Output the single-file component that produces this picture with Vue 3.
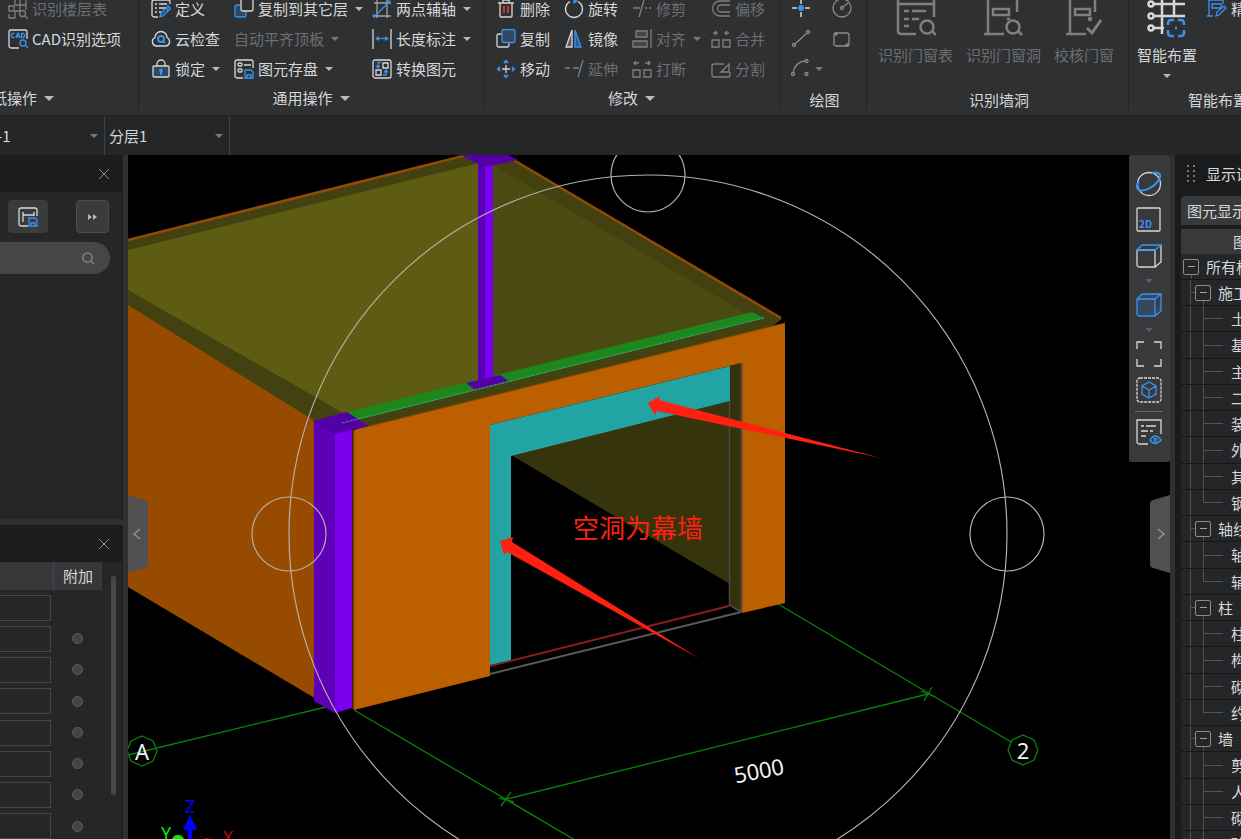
<template>
  <div class="app">
    <!-- 功能区 -->
    <header class="ribbon">
      <section v-for="g in groups" :key="g.label" class="group" :class="g.cls">
        <div class="tools">
          <button
            v-for="t in g.tools"
            :key="t.text"
            type="button"
            class="tool"
            :class="{ off: t.off }"
            :disabled="t.off"
          >
            <svg v-if="t.icon" class="icon" viewBox="0 0 20 20" v-html="icons[t.icon]"></svg>
            <span>{{ t.text }}</span>
            <i v-if="t.more" class="caret"></i>
          </button>
        </div>
        <button type="button" class="group-label">{{ g.label }}<i class="caret big"></i></button>
      </section>

      <section class="group draw">
        <div class="tools">
          <button v-for="d in drawTools" :key="d.icon" type="button" class="tool" :aria-label="d.name">
            <svg class="icon" viewBox="0 0 20 20" v-html="icons[d.icon]"></svg>
            <i v-if="d.more" class="caret dim"></i>
          </button>
        </div>
        <div class="group-label low">绘图</div>
      </section>

      <section class="group holes">
        <div class="bigs">
          <button v-for="b in holeTools" :key="b.text" type="button" class="big-tool off" disabled>
            <svg class="big-icon" viewBox="0 0 40 40" v-html="icons[b.icon]"></svg>
            <span>{{ b.text }}</span>
          </button>
        </div>
        <div class="group-label low">识别墙洞</div>
      </section>

      <section class="group smart">
        <div class="bigs">
          <button type="button" class="big-tool">
            <svg class="big-icon" viewBox="0 0 40 40" v-html="icons.smart"></svg>
            <span>智能布置</span>
            <i class="caret"></i>
          </button>
          <button type="button" class="tool">
            <svg class="icon" viewBox="0 0 20 20" v-html="icons.precise"></svg>
            <span>精</span>
          </button>
        </div>
        <div class="group-label low">智能布置</div>
      </section>
    </header>

    <!-- 楼层选择 -->
    <div class="floor-bar">
      <label class="pick first">
        <select aria-label="楼层"><option>-1</option></select>
        <i class="caret dim"></i>
      </label>
      <label class="pick">
        <select aria-label="分层"><option>分层1</option></select>
        <i class="caret dim"></i>
      </label>
    </div>

    <main class="body">
      <!-- 左侧面板 -->
      <aside class="left">
        <section class="panel">
          <div class="panel-head">
            <button type="button" class="close" aria-label="关闭">
              <svg viewBox="0 0 12 12"><path d="M1 1l10 10M11 1L1 11" /></svg>
            </button>
          </div>
          <div class="panel-tools">
            <button type="button" class="chip" aria-label="存档">
              <svg class="icon" viewBox="0 0 20 20" v-html="icons.archive"></svg>
            </button>
            <button type="button" class="chip more" aria-label="更多">
              <svg viewBox="0 0 10 8"><path d="M0 1l4 3-4 3zM5 1l4 3-4 3z" /></svg>
            </button>
          </div>
          <div class="search">
            <input type="text" aria-label="搜索" />
            <svg viewBox="0 0 14 14"><circle cx="6" cy="6" r="5" /><path d="M10 10l3 3" /></svg>
          </div>
        </section>

        <section class="panel">
          <div class="panel-head">
            <button type="button" class="close" aria-label="关闭">
              <svg viewBox="0 0 12 12"><path d="M1 1l10 10M11 1L1 11" /></svg>
            </button>
          </div>
          <div class="props">
            <table>
              <thead>
                <tr><th></th><th class="extra">附加</th></tr>
              </thead>
              <tbody>
                <tr v-for="n in 8" :key="n">
                  <td><input type="text" class="value" :aria-label="'属性值' + n" /></td>
                  <td class="extra">
                    <input v-if="n > 1" type="checkbox" class="dot" :aria-label="'附加' + n" />
                  </td>
                </tr>
              </tbody>
            </table>
            <div class="scrollbar"></div>
          </div>
        </section>
      </aside>

      <!-- 三维视图 -->
      <div class="viewport">
        <svg class="scene" viewBox="128 155 1042 684" preserveAspectRatio="xMinYMin slice">
          <!-- 轴网 -->
          <g class="axis">
            <path d="M128 755L330 706M354 710L580 843M778 604L1011 742M507 799L928 694" />
            <path d="M501 806L511 792M499 798L514 802M924 701L932 687M921 691L935 697" />
            <path d="M142 736l11 5 4 10-4 10-11 5-11-5-4-10 4-10z" />
            <path d="M1023 735l11 5 4 10-4 10-11 5-11-5-4-10 4-10z" />
          </g>
          <!-- 墙体 -->
          <polygon fill="#964b00" points="128,300 318,412 318,700 128,587" />
          <polygon fill="#43410f" points="128,240 467,156 512,160 782,319 770,328 360,430 315,421 128,305" />
          <path d="M128 240L465 155.500M512 159L781 318" stroke="#924b05" stroke-width="2.500" fill="none" />
          <polygon fill="#5d5c12" points="128,250 479,163 479,385 345,414 128,290" />
          <polygon fill="#4b4a10" points="491,164 744,312 744,318 491,382" />
          <polygon fill="#1c871b" points="347,412 752,312 764,318 345,423" />
          <polygon fill="#bc5f00" points="354,430 785,323 785,603 742,613 742,363 490,425 490,676 354,710" />
          <path d="M369 426L785 323" stroke="#7d4506" fill="none" />
          <path d="M353.500 430V709M741.500 363V612" stroke="#7a4204" stroke-width="2" fill="none" />
          <!-- 柱 -->
          <polygon fill="#5a00b8" points="478,162 485,164 485,384 478,384" />
          <polygon fill="#7800ee" points="485,164 493,162 493,382 485,384" />
          <polygon fill="#5300a4" points="461,155 508,155 518,160 484,167" />
          <polygon fill="#5300a4" points="466,383 500,375 509,381 475,390" />
          <polygon fill="#5e00b8" points="314,420 335,432 335,713 314,701" />
          <polygon fill="#7a00ee" points="335,432 352,428 352,708 335,713" />
          <polygon fill="#5300a4" points="313,421 347,412 369,426 335,434" />
          <path d="M342 423L764 318" stroke="#35a386" stroke-dasharray="3 1" fill="none" />
          <!-- 洞口与幕墙 -->
          <polygon fill="#35340c" points="511,455 730,401 730,584" />
          <polygon fill="#33320c" points="730,366 741,363 741,612 729,605" />
          <path d="M729.500 401V605L741 612M741 363V612" stroke="#48484a" stroke-width="1.500" fill="none" />
          <path d="M490 666L729 606" stroke="#8c1c1c" stroke-width="2" fill="none" />
          <path d="M490 674L741 612" stroke="#5a5a5c" stroke-width="2" fill="none" />
          <polygon fill="#22a4a5" points="490,425 730,366 730,401 511,456 511,660 490,665" />
          <!-- 动态观察圈 -->
          <g class="orbit">
            <circle cx="648" cy="534" r="359" />
            <circle cx="648" cy="175" r="37" />
            <circle cx="289" cy="534" r="37" />
            <circle cx="1007" cy="534" r="37" />
          </g>
          <g class="axis-text">
            <text x="142" y="760">A</text>
            <text x="1023" y="759">2</text>
            <text x="759" y="779" transform="rotate(-11 758 771)">5000</text>
          </g>
          <!-- 坐标系 -->
          <g class="gizmo">
            <path fill="#0000ff" d="M190 815l7 15h-5v9h-4v-9h-5z" />
            <ellipse fill="#00f000" cx="178" cy="840" rx="6" ry="5" />
            <path fill="#c00000" d="M205 838l10 1v2h-10z" />
            <text x="190" y="813" fill="#0000ff">Z</text>
            <text x="166" y="840" fill="#00f000">Y</text>
            <text x="228" y="844" fill="#c80000">X</text>
          </g>
          <!-- 标注 -->
          <g class="note">
            <polygon points="648,403 660,396 659,400 881,458 657,411 655,415" />
            <polygon points="500,541 513,537 512,542 700,659 507,552 504,555" />
            <text x="573" y="538">空洞为幕墙</text>
          </g>
        </svg>

        <button type="button" class="handle on-left" aria-label="收起左侧">
          <svg viewBox="0 0 20 78">
            <path class="tab" d="M0 0l17 5q3 1 3 4v60q0 3-3 4L0 78z" />
            <path class="arrow" d="M12 34l-6 5 6 5" />
          </svg>
        </button>
        <button type="button" class="handle on-right" aria-label="收起右侧">
          <svg viewBox="0 0 20 78">
            <path class="tab" d="M20 0L3 5Q0 6 0 9v60q0 3 3 4l17 5z" />
            <path class="arrow" d="M8 34l6 5-6 5" />
          </svg>
        </button>

        <nav class="view-bar">
          <template v-for="v in viewTools" :key="v.icon">
            <hr v-if="v.line" />
            <button type="button" :aria-label="v.name">
              <svg viewBox="0 0 26 26" v-html="icons[v.icon]"></svg>
            </button>
            <span v-if="v.more" class="drop"><i class="caret blue"></i></span>
          </template>
        </nav>
      </div>

      <!-- 右侧显示设置 -->
      <aside class="right">
        <div class="right-head">
          <svg class="grip" viewBox="0 0 8 18">
            <path d="M0 1h2M0 6h2M0 11h2M0 16h2M6 1h2M6 6h2M6 11h2M6 16h2" />
          </svg>
          显示设
        </div>
        <div class="tabs"><button type="button">图元显示</button></div>
        <div class="tree-head">图</div>
        <ul class="tree">
          <li v-for="(r, i) in rows" :key="i" :class="'lv' + r.lv">
            <span v-if="r.lv > 1" class="trunk" :class="{ tick: r.lv === 2 }"></span>
            <span v-if="r.lv === 3" class="branch" :class="{ last: r.last }"></span>
            <span v-else class="node"><button type="button" :aria-label="'折叠' + r.text"></button></span>
            <span class="name">{{ r.text }}</span>
          </li>
        </ul>
      </aside>
    </main>
  </div>
</template>

<script setup>
const B = '#3a92f0'
const R = '#c83a3a'

// 图标
const icons = {
  floorTable: '<path d="M7 1v5h5V1M1 7h5v5H1zM1 15v4h6M7 12v7M12 6h6V1M18 6v5M7 12h5V6"/><circle cx="14.500" cy="14.500" r="3"/><path d="M17 17l3 3"/>',
  cad: `<path d="M11 19H3a2 2 0 0 1-2-2V3a2 2 0 0 1 2-2h14a2 2 0 0 1 2 2v7"/><g stroke="${B}"><path d="M6.500 4.500h-2l-1 1v2l1 1h2M8 9l1.500-4.500h1L12 9M8.500 7.500h3M13.500 4.500v4h2l1-1v-2l-1-1z"/><circle cx="15" cy="14" r="3"/><path d="M17 16l3 3"/></g>`,
  define: `<path d="M7 18H3a2 2 0 0 1-2-2V3a2 2 0 0 1 2-2h14a2 2 0 0 1 2 2v2M4 5h2M8 5h8M4 9h2M8 9h7M4 13h2M8 13h2"/><path stroke="${B}" fill="#24486e" d="M9 18l1-4 7-7 2.500 2.500-7 7zM15 9l2.500 2.500"/>`,
  cloud: `<path d="M5 17a4.500 4.500 0 0 1-1-8.500 6 6 0 0 1 12 0A4.500 4.500 0 0 1 15 17z"/><g stroke="${B}" stroke-width="2"><circle cx="10" cy="10" r="3"/><path d="M12 12l2 2"/></g>`,
  lock: `<path d="M6 7V5a4 4 0 0 1 8 0v2"/><rect x="2" y="7" width="16" height="11" rx="1" fill="#30485e"/><path fill="${B}" stroke="none" d="M10 9.500a2 2 0 0 1 1 3.700V16H9v-2.800a2 2 0 0 1 1-3.700z"/>`,
  copyFloor: `<path stroke="${B}" fill="#30485e" d="M7 6H3a2 2 0 0 0-2 2v8a2 2 0 0 0 2 2h7a2 2 0 0 0 2-2v-4"/><rect x="7" y="0" width="12" height="12" rx="2" fill="#2e3032"/>`,
  save: `<path d="M9 19H3a2 2 0 0 1-2-2V3a2 2 0 0 1 2-2h14a2 2 0 0 1 2 2v6M10 6h7"/><rect x="4" y="4" width="4" height="3" rx="1"/><rect x="4" y="10" width="4" height="3" rx="1"/><path stroke="${B}" d="M11 11h6l2 2v6h-8zM13 19v-3h4v3"/>`,
  axis2: `<path stroke="#a0a2a4" d="M1 17h18M5 1v18M15 1v18M2 4h17"/><path stroke="${B}" d="M2 18L17 3"/><circle cx="2" cy="17" r="1" stroke="${B}"/><circle cx="17" cy="3" r="1" stroke="${B}"/>`,
  length: `<path d="M1 0v20M19 0v20"/><path stroke="${B}" d="M4 9.500h12"/><path stroke="none" fill="${B}" d="M3 9.500L7 7v5zM17 9.500L13 7v5z"/>`,
  convert: `<rect x="1" y="1" width="18" height="18" rx="2"/><path d="M11 4h5v5h-5zM4 11h5v5H4z"/><path stroke="${B}" d="M9 3.500H6V8M4 6.500L6 9l2-2.500M11 16h3v-4M12 13.500l2-2.500 2 2.500"/>`,
  remove: `<path d="M2 4h16M7 4V1h6v3M4 4v13a1 1 0 0 0 1 1h10a1 1 0 0 0 1-1V4"/><path stroke="${R}" stroke-width="2" d="M8 7v7M12 7v7"/>`,
  rotate: `<path d="M6 2.500a8.500 8.500 0 1 0 8 0"/><path stroke="${B}" fill="${B}" d="M10 0l3 2-3 2z"/>`,
  trim: '<path d="M1 9h7M7 18L12 1M13 9h2M17 9h2"/>',
  offset: '<path d="M19 2H9a7.500 7.500 0 0 0 0 15h10M19 6H10a3.500 3.500 0 0 0 0 7h9"/>',
  copy: `<path d="M6 5H3a2 2 0 0 0-2 2v9a2 2 0 0 0 2 2h8a2 2 0 0 0 2-2v-2"/><rect x="6" y="0.500" width="13" height="13" rx="2" stroke="${B}" fill="#30485e"/>`,
  mirror: `<path fill="#5a5c5e" d="M8 1v17H2z"/><path stroke="${B}" fill="#245c96" d="M11 1v17h6z"/>`,
  align: '<path d="M19 0v19"/><path fill="#424446" d="M4 2h11v6H4zM1 12h14v6H1z"/>',
  merge: '<path d="M1 11h7v7H1zM12 11h7v7h-7zM2 4h4M14 4h4M4 2l2 2-2 2M16 2l-2 2 2 2"/>',
  move: `<path d="M10 6v8M6 10h8"/><path stroke="${B}" stroke-width="2" d="M8 4l2-2 2 2M8 16l2 2 2-2M4 8l-2 2 2 2M16 8l2 2-2 2"/>`,
  extend: '<path d="M1 9h5M9 9h6M14 18L19 1"/>',
  breakup: '<path d="M1 11h7v7H1zM12 11h7v7h-7zM4 2L2 4l2 2M16 2l2 2-2 2M2 4h5M13 4h5"/>',
  split: '<path d="M13 5H3a2 2 0 0 0-2 2v9a2 2 0 0 0 2 2h14a2 2 0 0 0 2-2v-3M10 13l8-8v8z"/>',
  point: `<path stroke-width="1.500" d="M10 0v5M10 13v5M1 9h5M14 9h5"/><circle cx="10" cy="9" r="3" fill="${B}" stroke="none"/>`,
  circle: '<g stroke="#8a8c8e"><circle cx="10" cy="9" r="9"/><circle cx="10" cy="9" r="1.500"/><path d="M11 8l5-4"/></g>',
  line: '<g stroke="#8a8c8e"><path d="M4 15L16 4"/><circle cx="3" cy="16" r="1.500"/><circle cx="17" cy="3" r="1.500"/></g>',
  rect: '<g stroke="#8a8c8e"><rect x="2" y="4" width="15" height="13" rx="2"/><circle cx="4" cy="5" r="1"/><circle cx="15" cy="16" r="1"/></g>',
  arc: '<g stroke="#8a8c8e"><path d="M2 14Q4 3 14 2"/><circle cx="2" cy="15" r="1.500"/><circle cx="15.500" cy="2" r="1.500"/><circle cx="15.500" cy="15" r="1.500"/></g>',
  winTable: '<g stroke-width="2.500"><path d="M20 36H5a3 3 0 0 1-3-3V0M38 0v19M2 6h36M8 13h5M16 13h14M8 21h5M16 21h7M8 28h5"/><circle cx="31" cy="29" r="6.500"/><path d="M36 33l4 4"/></g>',
  winHole: '<g stroke-width="2.500"><path d="M4 36V0M33 0v14M0 36h20M9 11h16v6H9zM23 21h3"/><circle cx="29" cy="29" r="6.500"/><path d="M34 33l4 4"/></g>',
  winCheck: '<g stroke-width="2.500"><path d="M6 36V0M31 0v14M2 36h20M11 11h15v6H11z"/><path stroke-width="3" d="M23 30l5 5 9-13"/><circle cx="26" cy="21" r="1"/></g>',
  smart: `<g stroke-width="2.500"><path d="M7 6h31M7 18h31M7 30h10M15 0v36M27 0v18"/><circle cx="4" cy="6" r="2.500"/><circle cx="4" cy="18" r="2.500"/><circle cx="4" cy="30" r="2.500"/></g><path stroke="${B}" stroke-width="2.500" d="M21 27v-2a3 3 0 0 1 3-3h3M31 22h3a3 3 0 0 1 3 3v2M37 32v3a3 3 0 0 1-3 3h-3M27 38h-3a3 3 0 0 1-3-3v-3M28 30h2"/>`,
  precise: `<g stroke="${B}"><path d="M0 17h6M2 17V1h14v4M5 5h9v4H5z"/><path d="M9 17l1-4 7-6 2 2-7 7z"/></g>`,
  archive: `<path d="M10 19H3a2 2 0 0 1-2-2V3a2 2 0 0 1 2-2h14a2 2 0 0 1 2 2v6M5 5v10M5 8h11M16 5v4"/><path stroke="${B}" d="M11 11h6l2 2v6h-8zM13 19v-3h4v3"/>`,
  orbit: `<circle cx="13" cy="13" r="11.500"/><path stroke="${B}" stroke-width="2" d="M3 10c-6 9 2 12 11 7S27 3 22 2q-3-1-6 0"/>`,
  two: `<rect x="1" y="1" width="23" height="23" rx="1"/><text x="3" y="21" fill="${B}" stroke="none" font-size="10" font-weight="700">2D</text>`,
  cube: `<path d="M1 7h18v17H3a2 2 0 0 1-2-2zM19 24l6-5V2M19 7v17"/><path stroke="${B}" d="M1 7l5-5h19l-6 5z"/>`,
  cubeBlue: `<path stroke="${B}" fill="#34495e" d="M1 7h18v17H3a2 2 0 0 1-2-2zM1 7l5-5h19l-6 5M19 24l6-5V2"/>`,
  full: '<path d="M1 8V1h7M18 1h7v7M25 18v7h-7M8 25H1v-7"/>',
  boxSel: `<rect x="1" y="1" width="24" height="24" rx="3" stroke-dasharray="3 1"/><path stroke="${B}" d="M13 5l7 4v8l-7 4-7-4V9zM6 9l7 4 7-4M13 13v8"/>`,
  eye: `<path d="M12 25H3a2 2 0 0 1-2-2V1h24v14M5 7h3M10 7h10M5 12h7M14 12h3M5 17h5"/><path stroke="${B}" d="M14 21q5-8 11 0-6 7-11 0z"/><circle cx="19.500" cy="21" r="1.500" stroke="${B}"/>`
}

const groups = [
  {
    label: '图纸操作',
    cls: 'paper',
    tools: [
      { icon: 'floorTable', text: '识别楼层表', off: true },
      { icon: 'cad', text: 'CAD识别选项' }
    ]
  },
  {
    label: '通用操作',
    cls: 'common',
    tools: [
      { icon: 'define', text: '定义' },
      { icon: 'copyFloor', text: '复制到其它层', more: true },
      { icon: 'axis2', text: '两点辅轴', more: true },
      { icon: 'cloud', text: '云检查' },
      { text: '自动平齐顶板', off: true, more: true },
      { icon: 'length', text: '长度标注', more: true },
      { icon: 'lock', text: '锁定', more: true },
      { icon: 'save', text: '图元存盘', more: true },
      { icon: 'convert', text: '转换图元' }
    ]
  },
  {
    label: '修改',
    cls: 'modify',
    tools: [
      { icon: 'remove', text: '删除' },
      { icon: 'rotate', text: '旋转' },
      { icon: 'trim', text: '修剪', off: true },
      { icon: 'offset', text: '偏移', off: true },
      { icon: 'copy', text: '复制' },
      { icon: 'mirror', text: '镜像' },
      { icon: 'align', text: '对齐', off: true, more: true },
      { icon: 'merge', text: '合并', off: true },
      { icon: 'move', text: '移动' },
      { icon: 'extend', text: '延伸', off: true },
      { icon: 'breakup', text: '打断', off: true },
      { icon: 'split', text: '分割', off: true }
    ]
  }
]

const drawTools = [
  { icon: 'point', name: '点' },
  { icon: 'circle', name: '圆' },
  { icon: 'line', name: '直线' },
  { icon: 'rect', name: '矩形' },
  { icon: 'arc', name: '弧', more: true }
]

const holeTools = [
  { icon: 'winTable', text: '识别门窗表' },
  { icon: 'winHole', text: '识别门窗洞' },
  { icon: 'winCheck', text: '校核门窗' }
]

const viewTools = [
  { icon: 'orbit', name: '动态观察' },
  { icon: 'two', name: '二维' },
  { icon: 'cube', name: '视角', more: true },
  { icon: 'cubeBlue', name: '显示方式', more: true },
  { icon: 'full', name: '全屏' },
  { icon: 'boxSel', name: '局部三维' },
  { icon: 'eye', name: '显示设置', line: true }
]

// 构件树
const leaf = (str) => [...str].map((text, i, all) => ({ lv: 3, text, last: i === all.length - 1 }))
const rows = [
  { lv: 1, text: '所有构' },
  { lv: 2, text: '施工' },
  ...leaf('土基主二装外其钢'),
  { lv: 2, text: '轴线' },
  ...leaf('轴辅'),
  { lv: 2, text: '柱' },
  ...leaf('柱构砌约'),
  { lv: 2, text: '墙' },
  ...leaf('剪人砌砖')
]
</script>

<style>
body {
  background: #2e3032;
}
</style>

<style scoped>
.app {
  display: flex;
  flex-direction: column;
  height: 100vh;
  overflow: hidden;
  background: #2e3032;
  color: #d6d7d8;
  font: 15px/20px "Noto Sans CJK SC", sans-serif;
}

button,
input,
select {
  margin: 0;
  padding: 0;
  border: 0;
  background: none;
  color: inherit;
  font: inherit;
}

svg {
  display: block;
  flex: none;
  fill: none;
  stroke: currentColor;
}

.caret {
  flex: none;
  border: 4px solid transparent;
  border-top-color: #b8babb;
  border-bottom: 0;
}

.caret.big {
  border-width: 5px 5px 0;
}

.caret.dim,
.off .caret {
  border-top-color: #77797b;
}

.caret.blue {
  border-top-color: #565d6e;
}

/* 功能区 */
.ribbon {
  display: flex;
  flex: none;
  margin-top: -6px;
  padding-bottom: 5px;
  border-bottom: 1px solid #1f2022;
  white-space: nowrap;
}

.group {
  display: flex;
  flex: none;
  flex-direction: column;
  box-sizing: border-box;
  border-right: 1px solid #232426;
}

.tools {
  display: grid;
  grid-auto-rows: 30px;
  height: 90px;
}

.paper {
  width: 139px;
}

.paper .tools {
  padding-left: 8px;
}

.common {
  width: 345px;
}

.common .tools {
  grid-template-columns: 83px 138px auto;
  padding-left: 12px;
}

.modify {
  width: 296px;
}

.modify .tools {
  grid-template-columns: 68px 68px 79px auto;
  padding-left: 12px;
}

.draw {
  width: 87px;
}

.draw .tools {
  grid-template-columns: 41px auto;
  padding-left: 11px;
}

.holes {
  width: 262px;
}

.smart {
  flex: 1 0 112px;
}

.tool {
  display: flex;
  align-items: center;
  gap: 4px;
}

.tool .caret {
  margin-left: 3px;
}

.draw .caret {
  margin-left: 0;
}

.off {
  color: #6d6f71;
}

.off svg {
  color: #7d7f81;
}

.icon {
  width: 20px;
  height: 20px;
  stroke-width: 1.3;
}

.group-label {
  display: flex;
  align-items: center;
  justify-content: center;
  gap: 7px;
  height: 26px;
  padding-top: 2px;
}

.paper .group-label {
  justify-content: flex-end;
  padding-right: 84px;
}

.group-label.low {
  height: 20px;
  padding: 6px 0 0 3px;
}

.smart .group-label {
  justify-content: flex-start;
  padding-left: 59px;
}

.bigs {
  display: flex;
  gap: 13px;
  height: 90px;
  padding-left: 11px;
}

.smart .bigs {
  align-items: flex-start;
  gap: 10px;
  padding-left: 8px;
}

.smart .tool {
  height: 30px;
}

.big-tool {
  display: flex;
  flex-direction: column;
  align-items: center;
  padding-top: 4px;
}

.big-icon {
  width: 40px;
  height: 40px;
  margin-bottom: 7px;
}

.big-tool .caret {
  margin-top: 9px;
}

/* 楼层栏 */
.floor-bar {
  display: flex;
  flex: none;
  height: 39px;
  background: #252628;
}

.pick {
  display: flex;
  align-items: center;
  box-sizing: border-box;
  width: 125px;
  padding: 0 6px 0 4px;
  border-right: 1px solid #404143;
}

.pick.first {
  width: 105px;
  padding-left: 0;
}

.pick select {
  flex: 1;
  min-width: 0;
  appearance: none;
}

.pick.first select {
  text-indent: -3px;
}

.pick option {
  background: #252628;
}

.body {
  display: flex;
  flex: 1;
  min-height: 0;
}

/* 左侧 */
.left {
  display: grid;
  flex: none;
  grid-template-rows: 364fr 314fr;
  gap: 6px;
  width: 123px;
  margin-right: 5px;
}

.panel {
  min-height: 0;
  overflow: hidden;
  border-right: 1px solid #1c1d1f;
  background: #252628;
}

.panel-head {
  display: flex;
  align-items: center;
  justify-content: flex-end;
  height: 37px;
  padding-right: 12px;
  background: #1c1d1f;
}

.close svg {
  width: 12px;
  height: 12px;
  stroke: #8a8b8d;
}

.panel-tools {
  display: flex;
  justify-content: space-between;
  padding: 8px 13px 9px 8px;
}

.chip {
  display: grid;
  place-items: center;
  width: 40px;
  height: 33px;
  border-radius: 4px;
  background: #3a3b3d;
}

.chip.more {
  box-sizing: border-box;
  width: 33px;
  border: 1px solid #4b4c4e;
}

.chip.more svg {
  width: 10px;
  height: 8px;
  fill: #b4b5b6;
  stroke: none;
}

.search {
  display: flex;
  align-items: center;
  height: 32px;
  margin-right: 12px;
  padding-right: 15px;
  border-radius: 0 16px 16px 0;
  background: #464648;
}

.search input {
  flex: 1;
  min-width: 0;
}

.search svg {
  width: 13px;
  height: 13px;
  stroke: #77787a;
  stroke-width: 2;
}

.props {
  display: flex;
  align-items: flex-start;
  gap: 9px;
}

.props table {
  width: 102px;
  border-collapse: collapse;
  table-layout: fixed;
}

.props th {
  height: 28px;
  padding: 0;
  border-bottom: 2px solid #252628;
  background: #373839;
  background-clip: padding-box;
  font-weight: 400;
}

.props th.extra {
  width: 48px;
  border-left: 1px solid #454648;
}

.props td {
  height: 31px;
  padding: 0;
  text-align: center;
}

.props tr:nth-child(4n) td {
  height: 32px;
}

.value {
  display: block;
  box-sizing: border-box;
  width: 51px;
  height: 26px;
  border: 1px solid #454648;
  border-left: 0;
}

.dot {
  display: block;
  box-sizing: border-box;
  width: 11px;
  height: 11px;
  margin: 0 auto;
  border: 1px solid #5c5d5f;
  border-radius: 50%;
  background: #434446;
  appearance: none;
}

.scrollbar {
  width: 5px;
  height: 219px;
  margin-top: 14px;
  border-radius: 3px;
  background: #46474b;
}

/* 视图 */
.viewport {
  position: relative;
  flex: 1;
  min-width: 0;
  overflow: hidden;
  background: #000;
}

.scene {
  width: 100%;
  height: 100%;
  stroke: none;
}

.axis {
  fill: none;
  stroke: #0a820a;
  stroke-width: 1.3;
}

.orbit {
  fill: none;
  stroke: #b4b0a8;
  stroke-width: 1.2;
}

.axis-text {
  fill: #f2f2f2;
  font: 22px "Noto Sans", sans-serif;
  text-anchor: middle;
}

.gizmo text {
  font: 18px "Noto Sans", sans-serif;
  text-anchor: middle;
}

.note {
  fill: #ff2012;
}

.note text {
  font-size: 26px;
}

.handle {
  position: absolute;
  top: 340px;
}

.handle svg {
  width: 20px;
  height: 78px;
}

.handle .tab {
  fill: #505051;
  stroke: none;
}

.handle .arrow {
  stroke: #929394;
  stroke-width: 1.5;
}

.on-left {
  left: 0;
}

.on-right {
  right: 0;
}

.view-bar {
  position: absolute;
  top: 0;
  right: 0;
  display: flex;
  flex-direction: column;
  align-items: center;
  box-sizing: border-box;
  width: 41px;
  padding: 11px 2px 12px 0;
  border-radius: 2px;
  background: #38393b;
}

.view-bar button {
  display: grid;
  place-items: center;
  height: 36px;
}

.view-bar svg {
  width: 26px;
  height: 26px;
  stroke-width: 1.3;
}

.view-bar hr {
  width: 28px;
  height: 1px;
  margin: 3px 0 2px;
  border: 0;
  background: #67686a;
}

.drop {
  display: flex;
  align-items: center;
  height: 13px;
}

/* 右侧 */
.right {
  flex: none;
  box-sizing: border-box;
  width: 66px;
  margin-left: 5px;
  padding-left: 6px;
  overflow: hidden;
  background: #1a1b1d;
  white-space: nowrap;
}

.right-head {
  display: flex;
  align-items: center;
  gap: 11px;
  height: 38px;
  padding-left: 6px;
}

.grip {
  width: 8px;
  height: 18px;
  stroke: #77787a;
  stroke-width: 2;
}

.tabs {
  padding: 3px 0 4px;
}

.tabs button {
  height: 29px;
  padding: 0 6px;
  border-radius: 4px 4px 0 0;
  background: #37393b;
}

.tree-head {
  height: 25px;
  padding-left: 52px;
  background: #37393b;
  line-height: 25px;
}

.tree {
  margin: 0;
  padding: 0;
  list-style: none;
}

.tree li {
  display: flex;
  align-items: center;
  box-sizing: border-box;
  height: 26px;
  border-bottom: 1px solid #161718;
  background: #252628;
}

.tree li:nth-child(4n) {
  height: 27px;
}

.tree .name {
  margin-left: 7px;
}

.tree .lv3 .name {
  margin-left: 0;
}

.tree .lv1 {
  padding-left: 2px;
}

.trunk,
.branch,
.node {
  flex: none;
  align-self: stretch;
}

.trunk {
  width: 14px;
  background: linear-gradient(#515254, #515254) 9px 0 / 1px 100% no-repeat;
}

.trunk.tick {
  background:
    linear-gradient(#515254, #515254) 9px 0 / 1px 100% no-repeat,
    linear-gradient(#515254, #515254) 9px 50% / 5px 1px no-repeat;
}

.branch {
  width: 36px;
  background:
    linear-gradient(#515254, #515254) 8px 0 / 1px 100% no-repeat,
    linear-gradient(#515254, #515254) 8px 50% / 20px 1px no-repeat;
}

.branch.last {
  background:
    linear-gradient(#515254, #515254) 8px 0 / 1px 50% no-repeat,
    linear-gradient(#515254, #515254) 8px 50% / 20px 1px no-repeat;
}

.node {
  display: flex;
  align-items: center;
  background: linear-gradient(#515254, #515254) 8px 100% / 1px 8px no-repeat;
}

.node button {
  box-sizing: border-box;
  width: 16px;
  height: 16px;
  border: 1px solid #8a8b8d;
  border-radius: 2px;
  background: linear-gradient(#a0a1a2, #a0a1a2) center / 7px 1px no-repeat #252628;
}
</style>
